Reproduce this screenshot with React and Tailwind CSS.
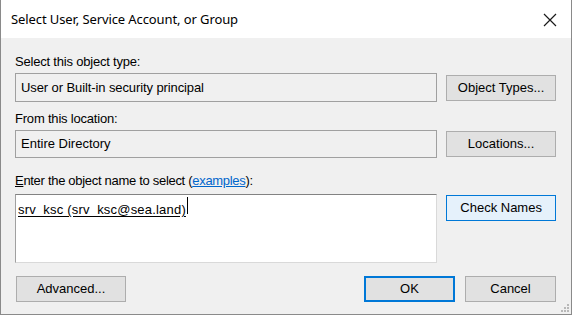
const ui = { fontFamily: '"Liberation Sans", Arial, sans-serif' };

function Btn({ children, className = '', style }) {
  return (
    <div
      className={`flex items-center justify-center h-[26px] text-[13px] text-black ${className}`}
      style={style}
    >
      {children}
    </div>
  );
}

export default function App() {
  return (
    <div className="w-[572px] h-[315px] bg-[#f0f0f0] flex flex-col border-l border-r border-b border-[#8a8a8a] overflow-hidden" style={ui}>
      {/* Title bar */}
      <div className="h-[38px] bg-white flex items-center justify-between pl-[10px] pr-[14px] shrink-0">
        <span className="text-[13px] tracking-[-0.1px] text-black mt-[1px]" style={{ fontFamily: '"Noto Sans", "Open Sans", sans-serif' }}>
          Select User, Service Account, or Group
        </span>
        <svg width="14" height="14" viewBox="0 0 14 14" className="mt-[1px]">
          <path d="M1 1 L13 13 M13 1 L1 13" stroke="#1a1a1a" strokeWidth="1.2" />
        </svg>
      </div>

      <div className="flex-1 pl-[14px] pr-[15px] pt-[16px] flex flex-col relative">
        {/* Object type */}
        <div className="text-[13px] leading-[16px] text-black tracking-[-0.2px]">Select this object type:</div>
        <div className="flex items-center gap-[9px] mt-[3px]">
          <div className="w-[423px] h-[29px] border border-[#a0a0a0] bg-[#f0f0f0] flex items-center pl-[5px] text-[13px] tracking-[-0.1px] text-black">
            User or Built-in security principal
          </div>
          <Btn className="w-[110px] bg-[#e1e1e1] border border-[#adadad]">Object Types...</Btn>
        </div>

        {/* Location */}
        <div className="text-[13px] leading-[16px] text-black mt-[9px] tracking-[-0.2px]">From this location:</div>
        <div className="flex items-center gap-[9px] mt-[3px]">
          <div className="w-[423px] h-[28px] border border-[#a0a0a0] bg-[#f0f0f0] flex items-center pl-[5px] text-[13px] text-black">
            Entire Directory
          </div>
          <Btn className="w-[110px] bg-[#e1e1e1] border border-[#adadad]">Locations...</Btn>
        </div>

        {/* Object name */}
        <div className="text-[13px] leading-[16px] text-black mt-[15px] tracking-[-0.3px]">
          <span className="underline">E</span>nter the object name to select (
          <span className="text-[#0066cc] underline">examples</span>):
        </div>
        <div className="flex items-start gap-[9px] mt-[5px]">
          <div className="w-[423px] h-[69px] bg-white border border-[#d9d9d9] border-t-[#828282] border-l-[#a0a0a0] pl-[2px] pt-[2px]">
            <span className="text-[13px] leading-[16px] text-black underline underline-offset-2 inline-block tracking-[0.2px]">srv_ksc (srv_ksc@sea.land)</span>
            <span className="inline-block w-[1px] h-[17px] bg-black align-top ml-[1px]" />
          </div>
          <Btn className="w-[110px] mt-[1px] bg-[#e5f1fb] border border-[#0078d7]">Check Names</Btn>
        </div>

        {/* Bottom buttons */}
        <div className="flex items-center mt-[13px]">
          <Btn className="w-[110px] ml-[1px] bg-[#e1e1e1] border border-[#adadad]">Advanced...</Btn>
          <div className="flex-1" />
          <Btn className="w-[91px] bg-[#e1e1e1] border-2 border-[#0078d7]">OK</Btn>
          <Btn className="w-[91px] ml-[10px] bg-[#e1e1e1] border border-[#adadad]">Cancel</Btn>
        </div>

        {/* Resize grip */}
        <svg width="10" height="10" viewBox="0 0 10 10" className="absolute right-[2px] bottom-[2px]">
          {[[8, 2], [8, 5], [5, 5], [8, 8], [5, 8], [2, 8]].map(([x, y], i) => (
            <rect key={i} x={x} y={y} width="2" height="2" fill="#b8b8b8" />
          ))}
        </svg>
      </div>
    </div>
  );
}
